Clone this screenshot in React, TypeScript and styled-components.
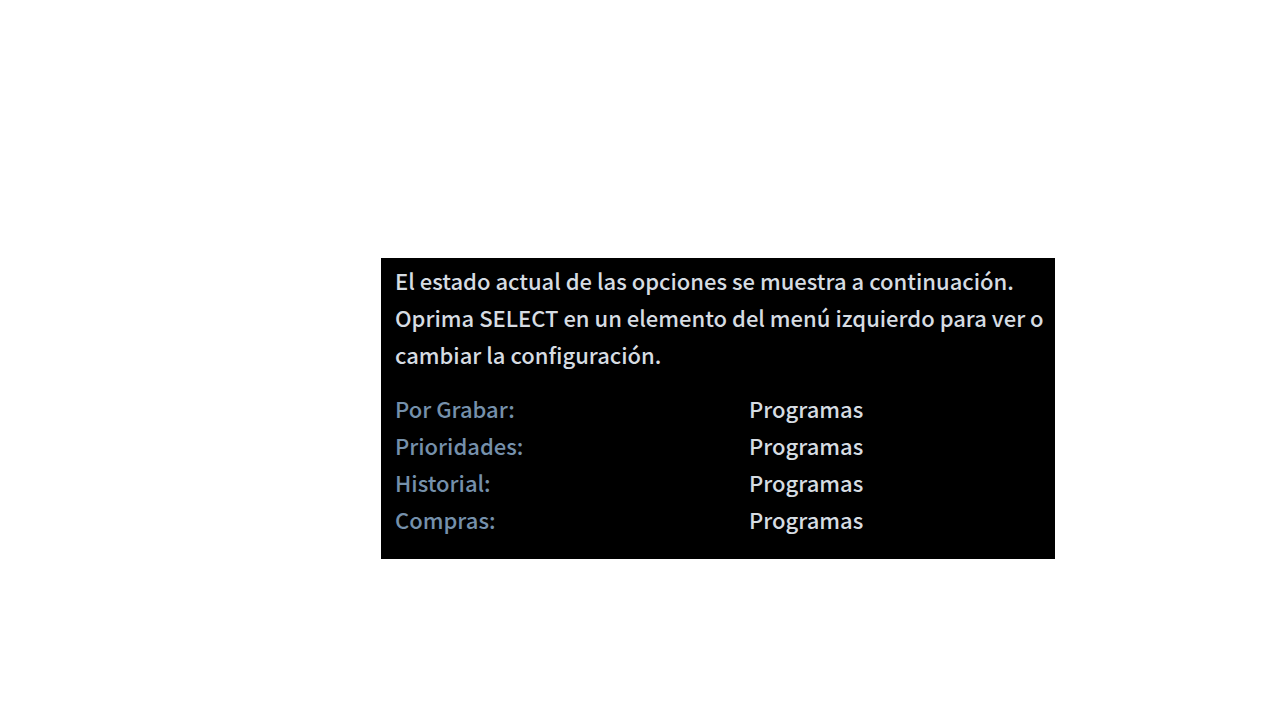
import React from "react";
import styled, { createGlobalStyle } from "styled-components";

const GlobalStyle = createGlobalStyle`
  * {
    box-sizing: border-box;
  }

  body {
    margin: 0;
    background: #fff;
  }
`;

const Page = styled.main`
  padding: 258px 225px 24px 381px;
`;

const Panel = styled.section`
  padding: 4px 0 21px 14px;
  background: #000;
  color: #d6dce2;
  font-family: "Noto Sans CJK JP", "Noto Sans", sans-serif;
  font-size: 22px;
  font-weight: 500;
  line-height: 37px;
`;

const Message = styled.p`
  margin: 0 0 17px;
`;

const Line = styled.span`
  display: block;
`;

const StatusList = styled.dl`
  display: grid;
  grid-template-columns: 354px 1fr;
  margin: 0;
`;

const StatusLabel = styled.dt`
  color: #7590ab;
`;

const StatusValue = styled.dd`
  margin: 0;
`;

const lines = [
  "El estado actual de las opciones se muestra a continuación.",
  "Oprima SELECT en un elemento del menú izquierdo para ver o",
  "cambiar la configuración.",
];

const statuses = [
  { label: "Por Grabar:", value: "Programas" },
  { label: "Prioridades:", value: "Programas" },
  { label: "Historial:", value: "Programas" },
  { label: "Compras:", value: "Programas" },
];

export default function App() {
  return (
    <>
      <GlobalStyle />
      <Page>
        <Panel>
          <Message>
            {lines.map((line) => (
              <Line key={line}>{line} </Line>
            ))}
          </Message>
          <StatusList>
            {statuses.map(({ label, value }) => (
              <React.Fragment key={label}>
                <StatusLabel>{label}</StatusLabel>
                <StatusValue>{value}</StatusValue>
              </React.Fragment>
            ))}
          </StatusList>
        </Panel>
      </Page>
    </>
  );
}
